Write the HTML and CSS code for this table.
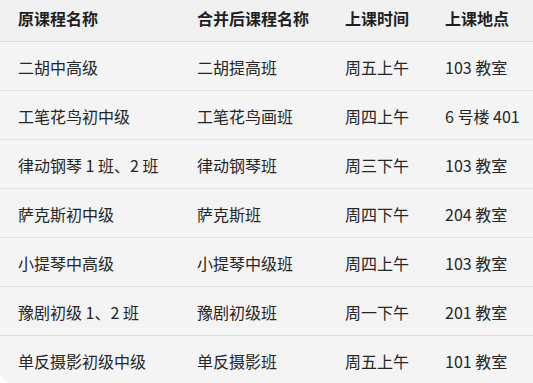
FILE: index.html
```html
<!DOCTYPE html>
<html lang="zh">
<head>
<meta charset="utf-8">
<link rel="stylesheet" href="styles.css">
</head>
<body>
<div class="wrap">
<table class="tbl">
<colgroup><col class="c1"><col class="c2"><col class="c3"><col class="c4"></colgroup>
<thead>
<tr><th>原课程名称</th><th>合并后课程名称</th><th>上课时间</th><th>上课地点</th></tr>
</thead>
<tbody>
<tr><td>二胡中高级</td><td>二胡提高班</td><td>周五上午</td><td>103 教室</td></tr>
<tr><td>工笔花鸟初中级</td><td>工笔花鸟画班</td><td>周四上午</td><td>6 号楼 401</td></tr>
<tr><td>律动钢琴 1 班、2 班</td><td>律动钢琴班</td><td>周三下午</td><td>103 教室</td></tr>
<tr><td>萨克斯初中级</td><td>萨克斯班</td><td>周四下午</td><td>204 教室</td></tr>
<tr><td>小提琴中高级</td><td>小提琴中级班</td><td>周四上午</td><td>103 教室</td></tr>
<tr><td>豫剧初级 1、2 班</td><td>豫剧初级班</td><td>周一下午</td><td>201 教室</td></tr>
<tr><td>单反摄影初级中级</td><td>单反摄影班</td><td>周五上午</td><td>101 教室</td></tr>
</tbody>
</table>
</div>
</body>
</html>
```
FILE: styles.css
```css
html, body {
  margin: 0;
  padding: 0;
  background: #ffffff;
}
.wrap {
  width: 533px;
  height: 383px;
  overflow: hidden;
  background: #f4f4f4;
  border-bottom-left-radius: 12px;
}
.tbl {
  width: 533px;
  border-collapse: collapse;
  table-layout: fixed;
  font-family: "Noto Sans CJK SC", "Noto Sans", sans-serif;
  font-size: 16px;
  color: #262626;
}
.c1 { width: 179px; }
.c2 { width: 148px; }
.c3 { width: 100px; }
.c4 { width: 106px; }
.tbl th, .tbl td {
  padding: 0 0 0 18px;
  text-align: left;
  white-space: nowrap;
  line-height: 20px;
}
.tbl th {
  height: 41px;
  font-weight: 700;
  color: #1f1f1f;
  background: #f1f1f1;
  border-bottom: 1px solid #e0e0e0;
  vertical-align: middle;
  padding-bottom: 4px;
  box-sizing: border-box;
}
.tbl td {
  height: 49px;
  border-bottom: 1px solid #e0e0e0;
  vertical-align: middle;
  padding-top: 2px;
  box-sizing: border-box;
}
```
